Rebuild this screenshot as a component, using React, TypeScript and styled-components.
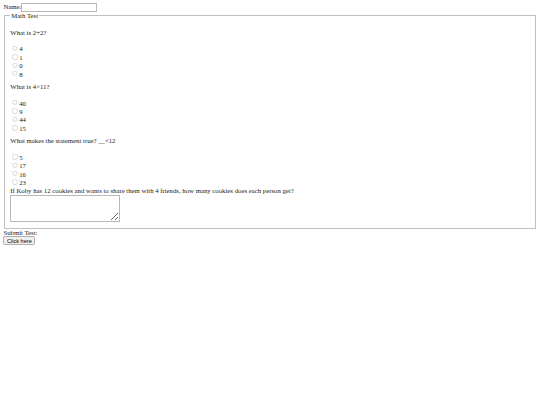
import React from "react";
import styled, { createGlobalStyle } from "styled-components";

const Global = createGlobalStyle`
  html, body { margin: 0; padding: 0; background: #fff; }
  body { font-family: "Liberation Serif", "Times New Roman", serif; color: #000; }
`;

const Page = styled.div`
  zoom: 0.421875;
  padding: 8px;
  font-size: 16px;
  color: #1a1a1a;
  font-family: "Liberation Serif", "Times New Roman", serif;
`;

const NameInput = styled.input`
  width: 180px;
  box-sizing: border-box;
  border: 2px solid #b8b8b8;
  border-radius: 2px;
  font-family: "Liberation Sans", Arial, sans-serif;
`;

const Fieldset = styled.fieldset`
  margin: 0 2px;
  padding: 6px 12px 12px;
  border: 2px groove #c0c0c0;
`;

const Question = styled.p<{ $first?: boolean }>`
  margin: ${(p) => (p.$first ? "16px" : "11px")} 0 21px;
`;

const Option = styled.label`
  display: block;
  height: 20px;
`;

const Radio = styled.input`
  opacity: 0.6;
`;

const Answer = styled.textarea`
  width: 261px;
  height: 65px;
  box-sizing: border-box;
  margin-top: 3px;
  margin-bottom: -2px;
  border: 2px solid #b8b8b8;
  border-radius: 2px;
  font-family: "Liberation Mono", monospace;
`;

const Button = styled.button`
  margin-top: 2px;
  border: 2px solid #b0b0b0;
  border-radius: 3px;
  background: #efefef;
  color: #000;
  padding: 1px 6px;
  font-size: 13.33px;
  font-family: "Liberation Sans", Arial, sans-serif;
`;

const questions = [
  { q: "What is 2+2?", name: "q1", opts: ["4", "1", "0", "8"] },
  { q: "What is 4\u00d711?", name: "q2", opts: ["40", "9", "44", "15"] },
  { q: "What makes the statement true? __<12", name: "q3", opts: ["5", "17", "16", "23"] },
];

export default function App() {
  return (
    <>
      <Global />
      <Page>
        <form onSubmit={(e) => e.preventDefault()}>
          Name:<NameInput type="text" />
          <Fieldset>
            <legend>Math Test</legend>
            {questions.map((item, i) => (
              <React.Fragment key={item.name}>
                <Question $first={i === 0}>{item.q}</Question>
                {item.opts.map((o) => (
                  <Option key={o}>
                    <Radio type="radio" name={item.name} value={o} />
                    {o}
                  </Option>
                ))}
              </React.Fragment>
            ))}
            If Koby has 12 cookies and wants to share them with 4 friends, how many cookies does each person get?
            <br />
            <Answer />
          </Fieldset>
          Submit Test:
          <br />
          <Button type="submit">Click here</Button>
        </form>
      </Page>
    </>
  );
}
